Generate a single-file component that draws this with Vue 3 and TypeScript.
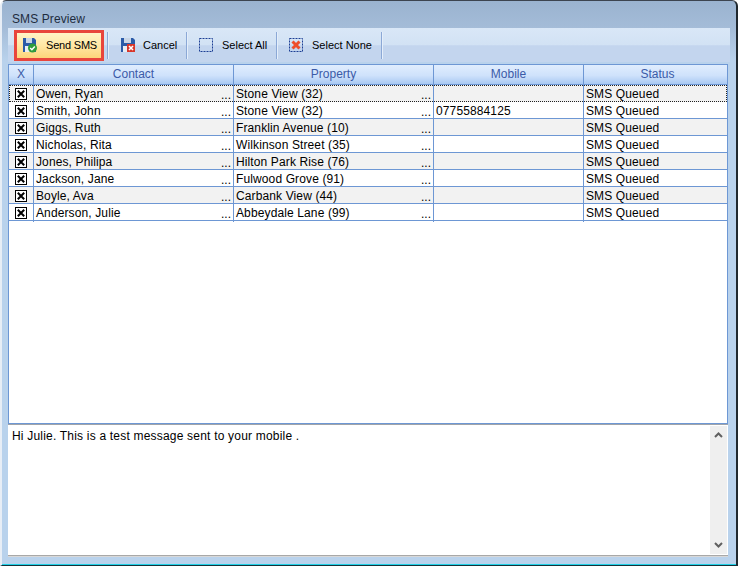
<script setup lang="ts">
interface Row { contact: string; property: string; mobile: string }
const rows: Row[] = [
  { contact: 'Owen, Ryan', property: 'Stone View (32)', mobile: '' },
  { contact: 'Smith, John', property: 'Stone View (32)', mobile: '07755884125' },
  { contact: 'Giggs, Ruth', property: 'Franklin Avenue (10)', mobile: '' },
  { contact: 'Nicholas, Rita', property: 'Wilkinson Street (35)', mobile: '' },
  { contact: 'Jones, Philipa', property: 'Hilton Park Rise (76)', mobile: '' },
  { contact: 'Jackson, Jane', property: 'Fulwood Grove (91)', mobile: '' },
  { contact: 'Boyle, Ava', property: 'Carbank View (44)', mobile: '' },
  { contact: 'Anderson, Julie', property: 'Abbeydale Lane (99)', mobile: '' },
]
</script>

<template>
  <div class="window">
    <div class="title">SMS Preview</div>
    <div class="toolbar">
      <button class="tool send">
        <svg class="ico" width="16" height="16" viewBox="0 0 16 16">
          <path d="M1 1h11l2 2v12H1z" fill="#2b5ba8" />
          <rect x="4" y="1" width="6" height="5" fill="#c9d6e6" />
          <rect x="3" y="9" width="9" height="6" fill="#e8edf3" />
          <circle cx="10.5" cy="11" r="4.5" fill="#2f9d3c" />
          <path d="M8.2 11l1.7 1.7 2.9-3.2" fill="none" stroke="#fff" stroke-width="1.5" />
        </svg>
        <span>Send SMS</span>
      </button>
      <i class="sep first"></i>
      <button class="tool cancel">
        <svg class="ico" width="16" height="16" viewBox="0 0 16 16">
          <path d="M1 1h12l2 2v12H1z" fill="#2b5ba8" />
          <rect x="4" y="1" width="7" height="5" fill="#c9d6e6" />
          <rect x="3" y="9" width="10" height="6" fill="#e8edf3" />
          <rect x="7" y="7" width="8" height="8" fill="#d8362a" />
          <path d="M9 9l4 4M13 9l-4 4" stroke="#fff" stroke-width="1.6" />
        </svg>
        <span>Cancel</span>
      </button>
      <i class="sep"></i>
      <button class="tool all">
        <svg class="ico" width="15" height="15" viewBox="0 0 15 15">
          <rect x="0.5" y="0.5" width="13" height="13" fill="none" stroke="#1c3f94" stroke-dasharray="2 1" />
        </svg>
        <span>Select All</span>
      </button>
      <i class="sep"></i>
      <button class="tool none">
        <svg class="ico" width="15" height="15" viewBox="0 0 15 15">
          <rect x="0.5" y="0.5" width="13" height="13" fill="none" stroke="#1c3f94" stroke-dasharray="2 1" />
          <path d="M3.5 3.5l7 7M10.5 3.5l-7 7" stroke="#ee4f2a" stroke-width="3" />
        </svg>
        <span>Select None</span>
      </button>
      <i class="sep"></i>
    </div>

    <div class="grid">
      <div class="row head">
        <div class="cell">X</div>
        <div class="cell">Contact</div>
        <div class="cell">Property</div>
        <div class="cell">Mobile</div>
        <div class="cell status">Status</div>
      </div>
      <div
        v-for="(r, i) in rows"
        :key="r.contact"
        class="row body"
        :class="{ alt: i % 2 === 0, focus: i === 0 }"
      >
        <div class="cell check">
          <svg width="12" height="12" viewBox="0 0 12 12">
            <rect x="0.5" y="0.5" width="11" height="11" fill="#fff" stroke="#000" />
            <path d="M2.8 2.8l6.4 6.4M9.2 2.8l-6.4 6.4" stroke="#000" stroke-width="2" />
          </svg>
        </div>
        <div class="cell text"><span>{{ r.contact }}</span><span class="more">...</span></div>
        <div class="cell text"><span>{{ r.property }}</span><span class="more">...</span></div>
        <div class="cell text"><span>{{ r.mobile }}</span></div>
        <div class="cell text"><span>SMS Queued</span></div>
      </div>
    </div>

    <div class="memo">
      <div class="message">Hi Julie. This is a test message sent to your mobile .</div>
      <div class="scroll">
        <svg width="9" height="6" viewBox="0 0 9 6"><path d="M1 5l3.5-3.5L8 5" fill="none" stroke="#606060" stroke-width="2" /></svg>
        <svg width="9" height="6" viewBox="0 0 9 6"><path d="M1 1l3.5 3.5L8 1" fill="none" stroke="#606060" stroke-width="2" /></svg>
      </div>
    </div>
  </div>
</template>

<style>
html, body { margin: 0; padding: 0; background: #fff; }
</style>

<style scoped>
.window {
  box-sizing: border-box;
  width: 738px;
  height: 566px;
  display: flex;
  flex-direction: column;
  padding: 0 8px 9px 6px;
  border-top: 1px solid #3c4450;
  border-left: 2px solid #e8eef6;
  border-right: 2px solid #20282e;
  border-bottom: 1px solid #14323a;
  border-radius: 6px 6px 0 0;
  background: linear-gradient(180deg, #9ab3d0 0, #a4bcd8 27px, #b9d2ec 60px, #b9d2ec 100%);
  box-shadow: inset 0 -1px 0 #1fd0e6;
  font-family: "Liberation Sans", Arial, sans-serif;
  font-size: 12px;
  color: #000;
  overflow: hidden;
}
.title {
  height: 27px;
  flex: none;
  margin-left: 4px;
  line-height: 36px;
  color: #1e2c3e;
  letter-spacing: 0.1px;
}
.toolbar {
  flex: none;
  height: 34px;
  margin: 0 -2px 2px 0;
  display: flex;
  align-items: center;
  font-size: 11px;
  background: linear-gradient(180deg, #d9e7f7 0, #d2e2f4 50%, #c3d5ee 52%, #c3d5ee 100%);
}
.tool {
  appearance: none;
  border: 0;
  background: none;
  padding: 0;
  margin: 0;
  font: inherit;
  color: #000;
  display: flex;
  align-items: center;
  height: 31px;
  box-sizing: border-box;
  white-space: nowrap;
  line-height: 15px;
}
.ico { flex: none; }
.send {
  width: 90px;
  margin-left: 6px;
  border: 3px solid #e8453c;
  padding-left: 5px;
  gap: 8px;
  letter-spacing: -0.2px;
  background: linear-gradient(180deg, #fff3c6 0, #ffe9a8 45%, #fdd57a 100%);
}
.cancel { width: 78px; padding-left: 12px; gap: 7px; }
.all { width: 89px; padding-left: 12px; gap: 8px; }
.none { width: 104px; padding-left: 12px; gap: 8px; }
.sep {
  flex: none;
  width: 1px;
  height: 27px;
  background: #8ba8d6;
  box-shadow: 1px 0 0 #e4eefa;
}
.sep.first { margin-left: 3px; }
.grid {
  flex: 1;
  min-height: 0;
  background: #fff;
  border-left: 1px solid #6d97d4;
  border-right: 1px solid #6d97d4;
  border-top: 1px solid #6d97d4;
}
.row {
  display: grid;
  grid-template-columns: 24px 200px 200px 150px 144px;
  box-sizing: border-box;
}
.head {
  height: 20px;
  background: linear-gradient(180deg, #e0edfe 0, #cfe2fb 55%, #a9c9f3 100%);
  border-bottom: 1px solid #6d97d4;
  color: #3b5ba8;
  text-align: center;
  line-height: 19px;
}
.head .cell + .cell { border-left: 1px solid #6d97d4; }
.head .status { padding-left: 4px; }
.body {
  height: 17px;
  border-bottom: 1px solid #6d97d4;
  background: #fff;
}
.body.alt { background: #f2f2f2; }
.body.focus {
  border-bottom: 1px dotted #333;
  outline: 1px dotted #222;
  outline-offset: -1px;
}
.body .cell + .cell { border-left: 1px solid #6d97d4; }
.cell { box-sizing: border-box; min-width: 0; }
.check { display: flex; align-items: center; justify-content: center; }
.text {
  display: flex;
  justify-content: space-between;
  padding: 1px 2px 0;
  line-height: 16px;
  white-space: nowrap;
  letter-spacing: 0.12px;
}
.more { padding-top: 1px; letter-spacing: 0; }
.memo {
  flex: none;
  height: 132px;
  box-sizing: border-box;
  display: flex;
  background: #fff;
  border-top: 1px solid #a0a4aa;
  border-bottom: 1px solid #a8a8a8;
  box-shadow: 0 -1px 0 #6d97d4, 0 1px 0 #d8d8d8;
  padding: 1px 1px 1px 0;
}
.message { flex: 1; padding: 2px 4px; line-height: 16px; letter-spacing: 0.2px; }
.scroll {
  flex: none;
  width: 17px;
  background: #efefef;
  display: flex;
  flex-direction: column;
  justify-content: space-between;
  align-items: center;
  padding: 6px 0;
  box-sizing: border-box;
}
</style>
